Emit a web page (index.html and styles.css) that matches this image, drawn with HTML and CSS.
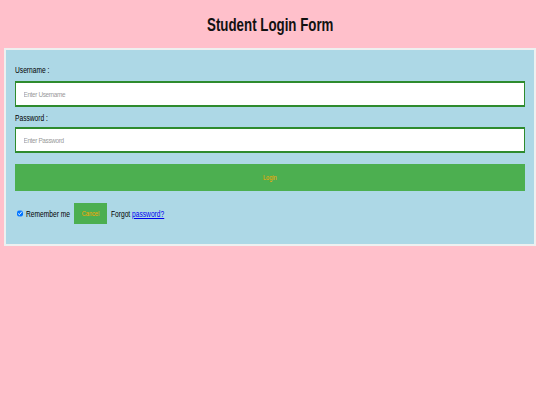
FILE: index.html
```html
<!DOCTYPE html>
<html lang="en">
<head>
<meta charset="utf-8">
<title>Student Login Form</title>
<link rel="stylesheet" href="styles.css">
</head>
<body>
  <h1 class="title"><span class="narrow-c">Student Login Form</span></h1>
  <form class="form">
    <label class="field-label" for="user"><span class="narrow">Username :</span></label>
    <input class="field" id="user" type="text" placeholder="Enter Username">
    <label class="field-label" for="pass"><span class="narrow">Password :</span></label>
    <input class="field" id="pass" type="password" placeholder="Enter Password">
    <button class="login-btn" type="button"><span class="narrow-c">Login</span></button>
    <div class="bottom-row">
      <input class="remember-box" type="checkbox" checked id="rem">
      <label class="remember-label" for="rem"><span class="narrow">Remember me</span></label>
      <button class="cancel-btn" type="button"><span class="narrow-c">Cancel</span></button>
      <span class="forgot"><span class="narrow">Forgot <a class="forgot-link" href="#">password?</a></span></span>
    </div>
  </form>
</body>
</html>
```
FILE: styles.css
```css
html, body {
  margin: 0;
  padding: 0;
  background: #ffc0cb;
}
body {
  font-family: "Liberation Sans", Arial, sans-serif;
  color: #000;
}
.narrow,
.narrow-c {
  display: inline-block;
  white-space: nowrap;
  transform: scaleX(0.7);
  transform-origin: left center;
}
.narrow-c {
  transform-origin: center center;
}
.title {
  margin: 14px 0 12px;
  font-size: 19px;
  line-height: 22px;
  font-weight: bold;
  text-align: center;
  color: #111;
}
.form {
  margin: 0 4px;
  border-style: solid;
  border-color: #eef0f0;
  border-width: 2px;
  background: #add8e6;
  padding: 14px 9px 20px;
  display: flex;
  flex-direction: column;
}
.field-label {
  display: block;
  font-size: 9.5px;
  line-height: 11px;
  height: 11px;
}
.field {
  display: block;
  box-sizing: border-box;
  width: 100%;
  height: 26px;
  margin: 6px 0 5px;
  padding: 0 7.5px;
  border-style: solid;
  border-color: #2e8b2e;
  border-width: 2px 1.5px;
  background: #fff;
  font-family: "Liberation Sans", Arial, sans-serif;
  font-size: 6.4px;
  letter-spacing: -0.35px;
  outline: none;
}
.field + .field-label + .field {
  margin-top: 4px;
  margin-bottom: 0;
}
.field::placeholder {
  color: #9a9a9a;
}
.login-btn {
  display: flex;
  align-items: center;
  justify-content: center;
  width: 100%;
  height: 27px;
  margin-top: 11px;
  border: none;
  padding: 0;
  background: #4caf50;
  color: orange;
  font-family: "Liberation Sans", Arial, sans-serif;
  font-size: 8px;
}
.bottom-row {
  display: flex;
  align-items: center;
  margin-top: 12px;
  font-size: 9.5px;
  line-height: 11px;
}
.remember-box {
  width: 6px;
  height: 7.5px;
  margin: 0 0 0 2px;
  flex: none;
}
.remember-label {
  display: block;
  width: 44px;
  margin-left: 3px;
  flex: none;
}
.cancel-btn {
  display: flex;
  align-items: center;
  justify-content: center;
  flex: none;
  margin-left: 4px;
  width: 33px;
  height: 21px;
  padding: 0;
  border: none;
  background: #4caf50;
  color: orange;
  font-family: "Liberation Sans", Arial, sans-serif;
  font-size: 8px;
}
.forgot {
  display: block;
  width: 60px;
  margin-left: 4px;
}
.forgot-link {
  color: #0000ee;
  text-decoration: underline;
}
```
